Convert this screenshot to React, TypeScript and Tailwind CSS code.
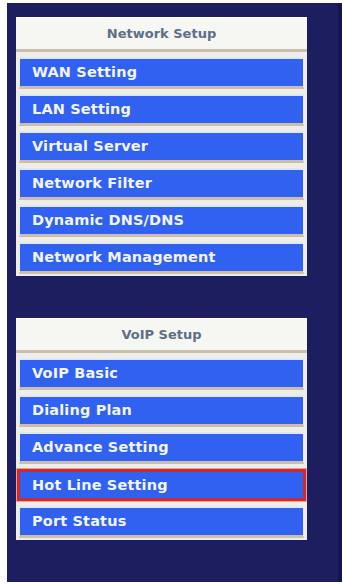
const networkItems = [
  "WAN Setting",
  "LAN Setting",
  "Virtual Server",
  "Network Filter",
  "Dynamic DNS/DNS",
  "Network Management",
];

const voipItems = [
  "VoIP Basic",
  "Dialing Plan",
  "Advance Setting",
  "Hot Line Setting",
  "Port Status",
];

function MenuItem({ label, active }: { label: string; active?: boolean }) {
  return (
    <div
      className={
        active
          ? "mx-[1px] border-[3px] border-[#d22a2a] bg-[#3061f0] h-[32px] flex items-center shadow-[0_0_0_1px_#e8a0a0]"
          : "mx-[3px] border-t-2 border-b-[3px] border-x border-t-[#dfe7fb] border-b-[#cbbfab] border-x-[#e4e9f4] bg-[#3061f0] h-[32px] flex items-center"
      }
    >
      <span className="pl-[12px] text-[14.5px] font-bold text-[#f2f5ff] leading-none tracking-[0.15px]">
        {label}
      </span>
    </div>
  );
}

function MenuBox({
  title,
  items,
  active,
}: {
  title: string;
  items: string[];
  active?: string;
}) {
  return (
    <div className="w-[291px] bg-[#efede7] pb-[2px]">
      <div className="h-[35px] bg-[#f6f6f2] border-b-[3px] border-[#c9bfae] border-t border-t-white flex items-center justify-center">
        <span className="text-[13px] font-bold text-[#5c6f87]">{title}</span>
      </div>
      <div className="flex flex-col pt-[5px] gap-[5px]">
        {items.map((it) => (
          <MenuItem key={it} label={it} active={it === active} />
        ))}
      </div>
    </div>
  );
}

export default function App() {
  return (
    <div
      className="w-[342px] h-[584px] bg-white pt-[3px] pl-[7px] overflow-hidden"
      style={{ fontFamily: '"DejaVu Sans", Verdana, sans-serif' }}
    >
      <div className="h-[579px] w-[335px] bg-[#1c1e5f] border-r-[4px] border-[#15174a] pt-[14px] pl-[9px]">
        <MenuBox title="Network Setup" items={networkItems} />
        <div className="h-[42px]" />
        <MenuBox title="VoIP Setup" items={voipItems} active="Hot Line Setting" />
      </div>
    </div>
  );
}
